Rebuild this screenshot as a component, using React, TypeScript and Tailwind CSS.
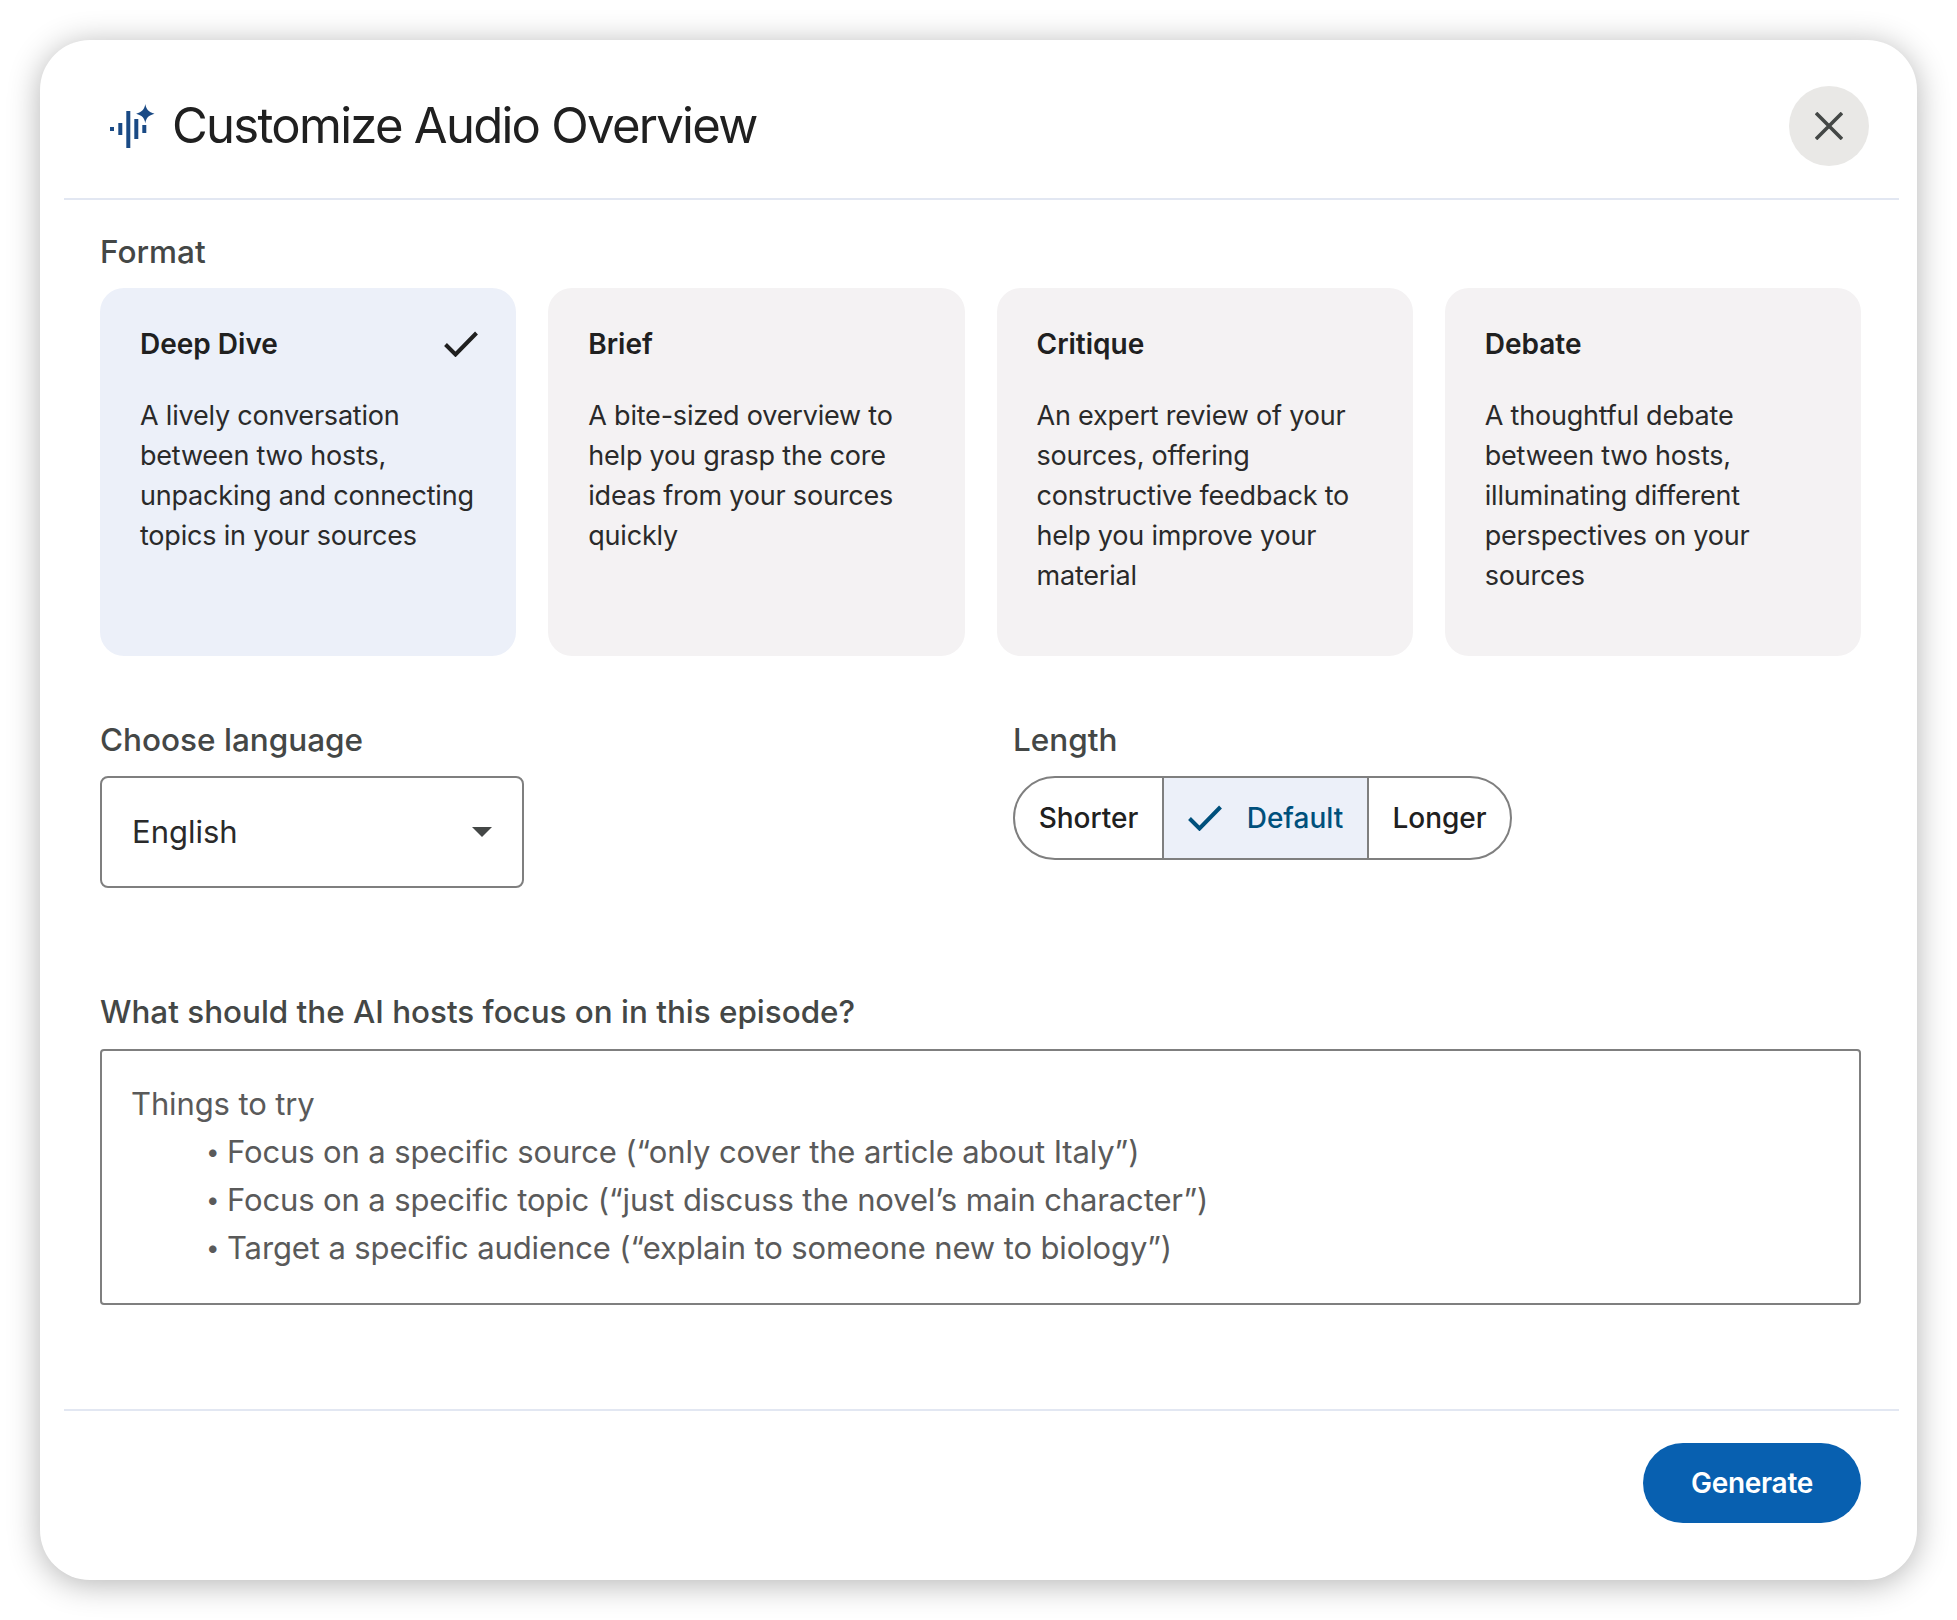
const sans = "font-['Inter','Liberation_Sans',sans-serif]";

function Check({ className }: { className: string }) {
  return (
    <svg viewBox="0 0 34 26" className={className} fill="none" stroke="currentColor" strokeWidth="4">
      <path d="M1.5 13.5 L11.5 23.5 L32.5 2" />
    </svg>
  );
}

const cards = [
  { t: "Deep Dive", d: ["A lively conversation", "between two hosts,", "unpacking and connecting", "topics in your sources"], on: true },
  { t: "Brief", d: ["A bite-sized overview to", "help you grasp the core", "ideas from your sources", "quickly"], on: false },
  { t: "Critique", d: ["An expert review of your", "sources, offering", "constructive feedback to", "help you improve your", "material"], on: false },
  { t: "Debate", d: ["A thoughtful debate", "between two hosts,", "illuminating different", "perspectives on your", "sources"], on: false },
];

export default function App() {
  return (
    <div className={`w-[1957px] h-[1620px] bg-white p-[40px] ${sans}`}>
      <div className="w-[1877px] h-[1540px] bg-white rounded-[50px] shadow-[0_4px_32px_rgba(0,0,0,0.3)] flex flex-col">
        <header className="ml-[24px] mr-[18px] h-[160px] border-b-2 border-[#e2e7f2] flex items-center justify-between pt-[13px] pl-[45px] pr-[30px] shrink-0">
          <div className="flex items-center gap-[17px]">
            <svg viewBox="0 0 46 44" className="w-[46px] h-[44px] text-[#1a4a85]" fill="currentColor">
              <rect x="1" y="23" width="4" height="4" />
              <rect x="9.3" y="19" width="4" height="12" />
              <rect x="17.3" y="7" width="4" height="37" />
              <rect x="25.3" y="15" width="4" height="20" />
              <rect x="33.3" y="21" width="4" height="8" />
              <path d="M36.3 0 C37.2 5.5 39.5 8 45.5 9.7 C39.5 11.4 37.2 13.8 36.3 19.2 C35.4 13.8 33.1 11.4 27.1 9.7 C33.1 8 35.4 5.5 36.3 0 Z" />
            </svg>
            <h1 className="text-[49px] leading-none font-normal text-[#202020] tracking-[-1.72px]">Customize Audio Overview</h1>
          </div>
          <button className="w-[80px] h-[80px] rounded-full bg-[#e9e8e6] flex items-center justify-center text-[#444746]">
            <svg viewBox="0 0 28 28" className="w-[28px] h-[28px]" stroke="currentColor" strokeWidth="3.6" fill="none">
              <path d="M1 1 L27 27 M27 1 L1 27" />
            </svg>
          </button>
        </header>

        <main className="flex-1 pl-[60px] pr-[56px] pt-[32px] text-[#444746]">
          <h2 className="text-[31.5px] leading-[40px] font-[550] mb-[16px]">Format</h2>
          <div className="grid grid-cols-4 gap-[32px]">
            {cards.map((c) => (
              <div key={c.t} className={`h-[368px] rounded-[24px] px-[40px] pt-[36px] ${c.on ? "bg-[#ecf0f9]" : "bg-[#f4f2f3]"}`}>
                <div className="flex items-center justify-between h-[40px] mb-[32px]">
                  <span className="text-[28px] font-semibold text-[#202020]">{c.t}</span>
                  {c.on && <Check className="w-[34px] h-[26px] text-[#202020] mr-[-2px]" />}
                </div>
                <p className="text-[27px] leading-[40px] tracking-[-0.2px] text-[#2a2a2a]">
                  {c.d.map((l) => (
                    <span key={l} className="block whitespace-nowrap">{l}</span>
                  ))}
                </p>
              </div>
            ))}
          </div>

          <div className="flex mt-[64px] h-[270px]">
            <div className="w-[913px]">
              <h2 className="text-[31.5px] leading-[40px] font-[550] mb-[16px]">Choose language</h2>
              <div className="w-[424px] h-[112px] border-2 border-[#7f7f7f] rounded-[8px] flex items-center justify-between pl-[30px] pr-[30px]">
                <span className="text-[31px] text-[#2a2a2a]">English</span>
                <span className="w-0 h-0 border-x-[10px] border-x-transparent border-t-[10px] border-t-[#444746]" />
              </div>
            </div>
            <div>
              <h2 className="text-[31.5px] leading-[40px] font-[550] mb-[16px]">Length</h2>
              <div className="flex w-[499px] h-[84px] border-2 border-[#7f7f7f] rounded-full overflow-hidden text-[28px] font-[550] text-[#202020]">
                <div className="w-[147px] flex items-center justify-center">Shorter</div>
                <div className="w-[207px] border-x-2 border-[#7f7f7f] bg-[#ecf0f9] flex items-center justify-center gap-[25px] text-[#00507c]">
                  <Check className="w-[34px] h-[26px]" />
                  <span>Default</span>
                </div>
                <div className="flex-1 flex items-center justify-center">Longer</div>
              </div>
            </div>
          </div>

          <h2 className="text-[31.4px] leading-[40px] font-[550] mt-[2px] mb-[17px]">What should the AI hosts focus on in this episode?</h2>
          <div className="h-[256px] border-2 border-[#7f7f7f] rounded-[4px] pl-[29px] pt-[29px] text-[31px] leading-[48px] tracking-[-0.12px] text-[#5a5a5a]">
            <div>Things to try</div>
            <ul className="pl-[77px]">
              <li className="flex"><span className="w-[19px] text-[24px] ml-[-2px] mr-[2px]">•</span>Focus on a specific source (“only cover the article about Italy”)</li>
              <li className="flex"><span className="w-[19px] text-[24px] ml-[-2px] mr-[2px]">•</span>Focus on a specific topic (“just discuss the novel’s main character”)</li>
              <li className="flex"><span className="w-[19px] text-[24px] ml-[-2px] mr-[2px]">•</span>Target a specific audience (“explain to someone new to biology”)</li>
            </ul>
          </div>
        </main>

        <footer className="ml-[24px] mr-[18px] h-[171px] shrink-0 border-t-2 border-[#e2e7f2] flex items-start justify-end pt-[32px] pr-[38px]">
          <button className="w-[218px] h-[80px] rounded-full bg-[#0860b0] text-white text-[28px] font-semibold tracking-[-0.3px]">Generate</button>
        </footer>
      </div>
    </div>
  );
}
